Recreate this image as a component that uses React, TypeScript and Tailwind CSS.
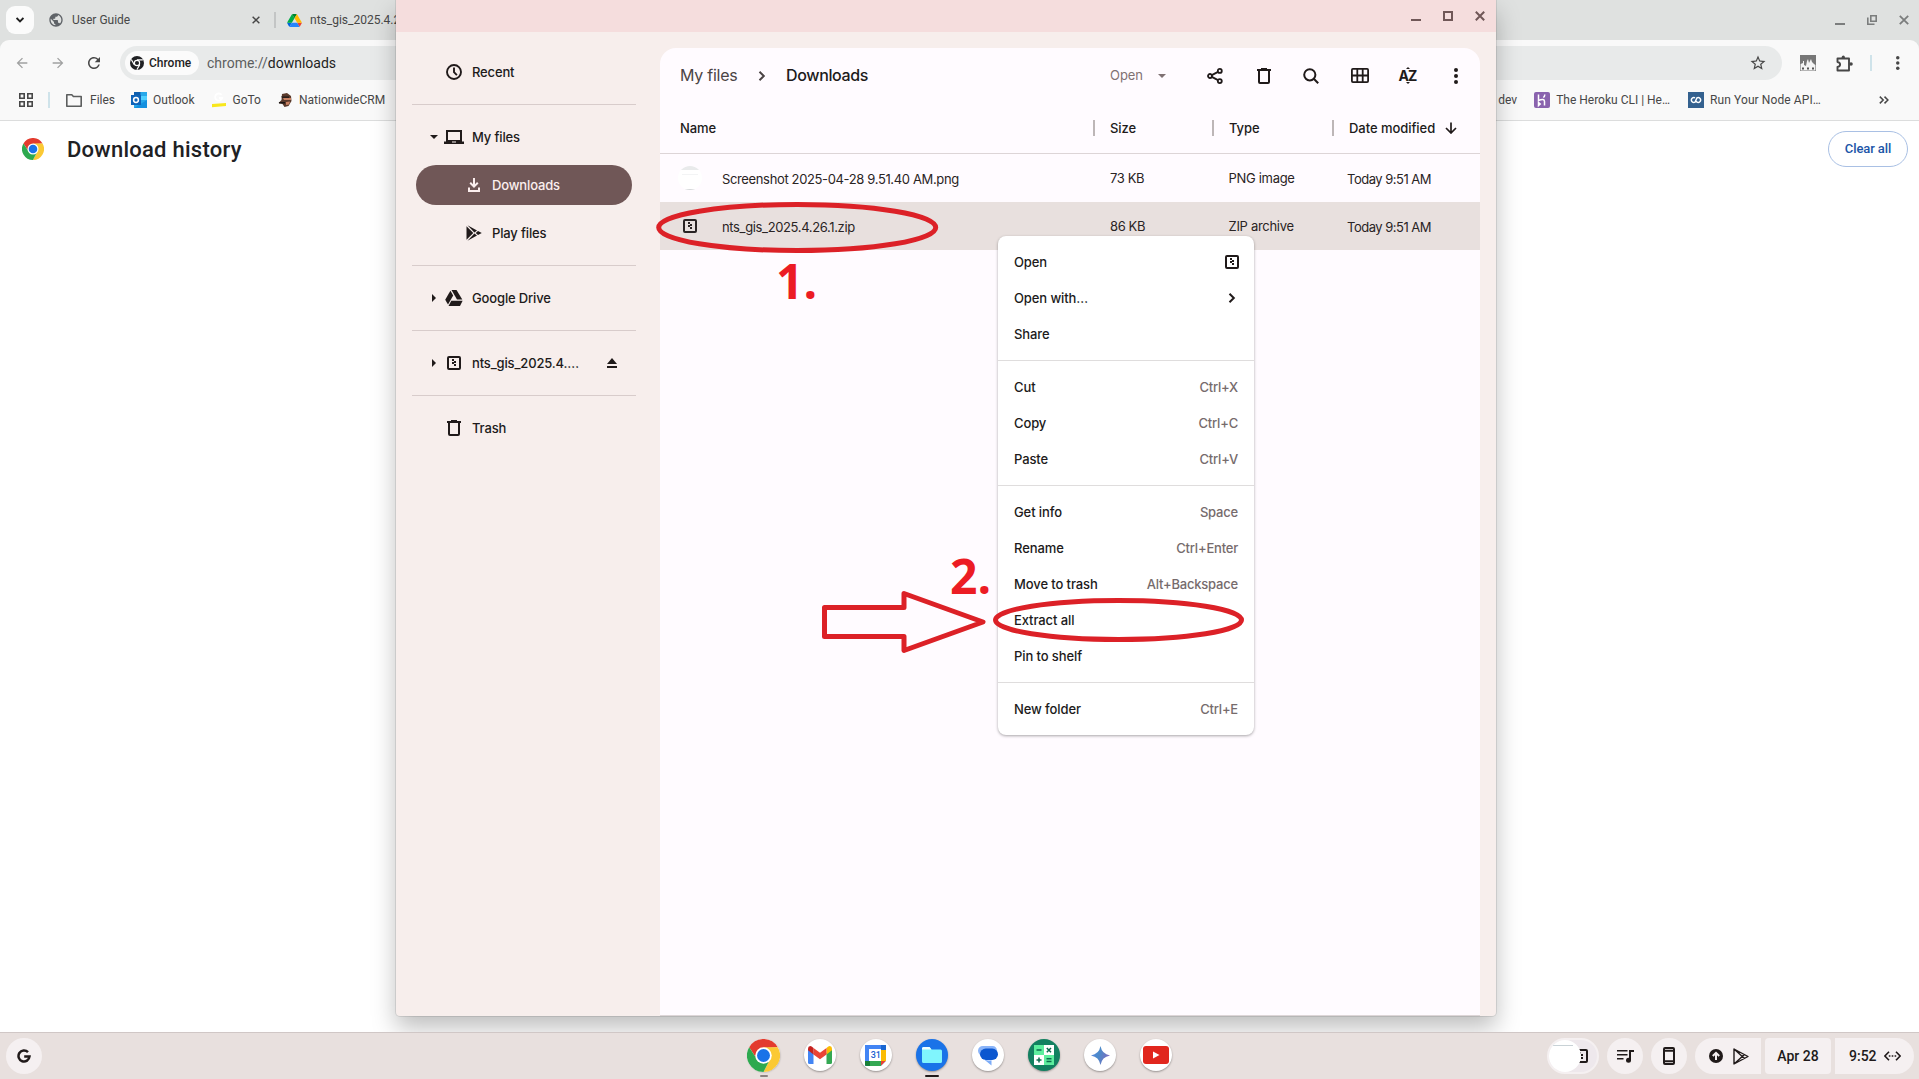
import React from "react";
import { MdArrowBack, MdArrowForward, MdRefresh, MdPublic, MdStarOutline } from "react-icons/md";

type IconProps = { className?: string };

const ui = "font-['Inter','Liberation_Sans',sans-serif]";

/* ---------- icons ---------- */

function ChromeLogo({ className = "", mono = false }: IconProps & { mono?: boolean }) {
  if (mono) {
    return (
      <svg viewBox="0 0 48 48" className={className} fill="none" stroke="#202124">
        <circle cx="24" cy="24" r="24" fill="#202124" stroke="none" />
        <circle cx="24" cy="24" r="9" fill="#202124" stroke="#fff" strokeWidth="4" />
        <path d="M24 13H44M14.5 29.5L4.5 12M33.5 29.5L23.5 47" stroke="#fff" strokeWidth="4" />
      </svg>
    );
  }
  return (
    <svg viewBox="0 0 48 48" className={className}>
      <circle cx="24" cy="24" r="24" fill="#fff" />
      <path d="M3.2 12A24 24 0 0 1 44.8 12L24 13L14.5 29.5Z" fill="#e33b2e" />
      <path d="M44.8 12A24 24 0 0 1 24 48L33.5 29.5L24 12Z" fill="#fbc934" />
      <path d="M24 48A24 24 0 0 1 3.2 12L14.5 29.5L33.5 29.5Z" fill="#2da94f" />
      <circle cx="24" cy="24" r="12" fill="#fff" />
      <circle cx="24" cy="24" r="9.4" fill="#1a73e8" />
    </svg>
  );
}

function DriveColor({ className = "" }: IconProps) {
  return (
    <svg viewBox="0 0 87.3 78" className={className}>
      <path d="m6.6 66.85 3.85 6.65c.8 1.4 1.95 2.5 3.3 3.3l13.75-23.8h-27.5c0 1.55.4 3.1 1.2 4.5z" fill="#0066da" />
      <path d="m43.65 25-13.75-23.8c-1.35.8-2.5 1.9-3.3 3.3l-25.4 44a9.06 9.06 0 0 0 -1.2 4.5h27.5z" fill="#00ac47" />
      <path d="m73.55 76.8c1.35-.8 2.5-1.9 3.3-3.3l1.6-2.75 7.65-13.25c.8-1.4 1.2-2.95 1.2-4.5h-27.5l5.85 11.5z" fill="#ea4335" />
      <path d="m43.65 25 13.75-23.8c-1.35-.8-2.9-1.2-4.5-1.2h-18.5c-1.6 0-3.15.45-4.5 1.2z" fill="#00832d" />
      <path d="m59.8 53h-32.3l-13.75 23.8c1.35.8 2.9 1.2 4.5 1.2h50.8c1.6 0 3.15-.45 4.5-1.2z" fill="#2684fc" />
      <path d="m73.4 26.5-12.7-22c-.8-1.4-1.95-2.5-3.3-3.3l-13.75 23.8 16.15 28h27.45c0-1.55-.4-3.1-1.2-4.5z" fill="#ffba00" />
    </svg>
  );
}

function DriveMono({ className = "" }: IconProps) {
  return (
    <svg viewBox="0 0 18 16" className={className} fill="currentColor">
      <path d="M5.4.8 8.2 5.6 3 14.6.2 9.8Z" />
      <path d="M6.5 0H11.5L17.3 9.6H12Z" />
      <path d="M6.3 10.8H17.6L15 15.9H3.5Z" />
    </svg>
  );
}

function ZipIcon({ className = "" }: IconProps) {
  return (
    <svg viewBox="0 0 14 14" className={className}>
      <rect x="1" y="1" width="12" height="12" rx="1" fill="none" stroke="currentColor" strokeWidth="2" />
      <path d="M5 3h2v2H5zM7 5h2v2H7zM5 6h2v2H5zM7 8h2v2H7z" fill="currentColor" />
    </svg>
  );
}

function TrashIcon({ className = "" }: IconProps) {
  return (
    <svg viewBox="0 0 14 16" className={className} fill="none" stroke="currentColor" strokeWidth="2">
      <path d="M2 2.5V14a1 1 0 0 0 1 1h8a1 1 0 0 0 1-1V2.5" />
      <path d="M0 2h14M4 1h6" />
    </svg>
  );
}

function ClockIcon({ className = "" }: IconProps) {
  return (
    <svg viewBox="0 0 16 16" className={className} fill="none" stroke="currentColor" strokeWidth="1.9">
      <circle cx="8" cy="8" r="7" />
      <path d="M8 3.500V8.200L10.900 11.100" />
    </svg>
  );
}

function CloseIcon({ className = "", sw = 2 }: IconProps & { sw?: number }) {
  return (
    <svg viewBox="0 0 10 10" className={className} stroke="currentColor" strokeWidth={sw}>
      <path d="M.8.8 9.2 9.2M9.2.8.8 9.2" />
    </svg>
  );
}

function DotsIcon({ className = "" }: IconProps) {
  return (
    <svg viewBox="0 0 4 16" className={className} fill="currentColor">
      <circle cx="2" cy="2" r="2" />
      <circle cx="2" cy="8" r="2" />
      <circle cx="2" cy="14" r="2" />
    </svg>
  );
}

function ChevronIcon({ className = "" }: IconProps) {
  return (
    <svg viewBox="0 0 8 10" className={className} fill="none" stroke="currentColor" strokeWidth="2">
      <path d="M1.5.8 5.8 5 1.5 9.2" />
    </svg>
  );
}

function Tri({ dir, className = "" }: IconProps & { dir: "down" | "right" }) {
  return (
    <svg viewBox="0 0 8 8" className={className} fill="currentColor">
      <path d={dir === "down" ? "M0 2h8L4 6z" : "M2 0v8l4-4z"} />
    </svg>
  );
}

/* ---------- browser behind ---------- */

function Bookmark({ icon, label, className = "" }: { icon?: React.ReactNode; label: string; className?: string }) {
  return (
    <div className={"flex h-4 shrink-0 items-center whitespace-nowrap text-[12px] leading-4 text-[#474747] " + className}>
      {icon}
      <span>{label}</span>
    </div>
  );
}

function Browser() {
  return (
    <div className="flex h-[1032px] flex-col bg-white font-[Roboto,sans-serif]">
      <div className="flex h-10 shrink-0 items-center bg-[#dfe1e0] text-[#474747]">
        <div className="ml-1.5 flex size-7 items-center justify-center rounded-[9px] bg-[#fbfbfb] text-[#1f1f1f]">
          <svg viewBox="0 0 8 6" className="h-1.5 w-2" fill="none" stroke="currentColor" strokeWidth="1.8">
            <path d="M.6 1 4 4.4 7.4 1" />
          </svg>
        </div>
        <MdPublic className="ml-3.5 size-4 text-[#5f6368]" />
        <span className="ml-2 w-[180px] text-[12px]">User Guide</span>
        <CloseIcon className="size-2" sw={1.8} />
        <div className="ml-3.5 h-4 w-0.5 bg-[#c3c5c5]" />
        <DriveColor className="ml-[11px] h-[13px] w-[15px]" />
        <span className="ml-2 text-[12px]">nts_gis_2025.4.26.1.zip</span>
        <div className="ml-auto mr-2.5 flex items-center text-[#7b7d7d]">
          <div className="mt-2 h-0.5 w-2.5 bg-current" />
          <svg viewBox="0 0 10 10" className="ml-[22px] size-2.5" fill="none" stroke="currentColor" strokeWidth="1.6">
            <path d="M3.8.8h5.4v5.4H3.8zM.8 2.5v6.7h6.7" />
          </svg>
          <CloseIcon className="ml-[22px] size-2.5" sw={1.8} />
        </div>
      </div>
      <div className="shrink-0 bg-[#dfe1e0]">
        <div className="h-[81px] rounded-t-[9px] border-b border-[#dcdddd] bg-[#f9f9f9]">
          <div className="flex h-[46px] items-center">
            <MdArrowBack className="ml-3.5 size-4 text-[#a0a1a1]" />
            <MdArrowForward className="ml-5 size-4 text-[#a0a1a1]" />
            <MdRefresh className="ml-[19px] size-[18px] text-[#474747]" />
            <div className="ml-[17px] flex h-[34px] w-[1662px] items-center rounded-full bg-[#e8eaea]">
              <div className="ml-[5px] flex h-6 w-[74px] items-center rounded-full bg-[#fbfbfb] pl-[5px] text-[12px] font-medium text-[#1f1f1f]">
                <ChromeLogo mono className="mr-[5px] size-3.5" />
                <span>Chrome</span>
              </div>
              <span className="ml-2 text-[14px] text-[#5c5e5e]">
                chrome://<span className="text-[#1f1f1f]">downloads</span>
              </span>
              <MdStarOutline className="ml-auto mr-[15px] size-[18px] text-[#474747]" />
            </div>
            <svg viewBox="0 0 16 16" className="ml-[18px] size-4">
              <path d="M0 0h16v16H0z" fill="#777" />
              <path d="M.6 15.400V9l2.400-1V6h1v4l2 1 1-5 1-2 1 4 2-4 1 3 2 2 1.400 1v5.400z" fill="#f4f4f4" />
              <path d="M2 12.500h2v2H2zM7 12.500h2v2H7zM12 12.500h2v2h-2z" fill="#555" />
            </svg>
            <svg viewBox="0 0 17 17" className="ml-5 size-[17px]" fill="none" stroke="#474747" strokeWidth="1.9">
              <path d="M1.5 3.5H13V15.5H1.5V12q2.6-.5 2.6-2.5T1.5 7z" strokeLinejoin="round" />
              <circle cx="7.3" cy="2.2" r="1.6" fill="#474747" stroke="none" />
              <circle cx="15" cy="9" r="1.8" fill="#474747" stroke="none" />
            </svg>
            <div className="ml-[17px] h-4 w-0.5 bg-[#cfe3ea]" />
            <DotsIcon className="ml-6 h-3.5 w-[3.5px] text-[#474747]" />
          </div>
          <div className="flex h-[28px] items-center">
            <svg viewBox="0 0 14 14" className="ml-[19px] size-3.5" fill="none" stroke="#474747" strokeWidth="1.6">
              <path d="M.8.8h4.4v4.4H.8zM8.8.8h4.4v4.4H8.8zM.8 8.8h4.4v4.4H.8zM8.8 8.8h4.4v4.4H8.8z" />
            </svg>
            <div className="ml-[15px] h-4 w-0.5 bg-[#cfe3ea]" />
            <Bookmark
              className="ml-4"
              label="Files"
              icon={
                <svg viewBox="0 0 16 13" className="mr-2 h-[13px] w-4" fill="none" stroke="#5c5e5e" strokeWidth="1.6">
                  <path d="M.8.8h5l1.6 1.7h7.8v9.7H.8z" strokeLinejoin="round" />
                </svg>
              }
            />
            <Bookmark
              className="ml-4"
              label="Outlook"
              icon={
                <svg viewBox="0 0 16 16" className="mr-1.5 size-4">
                  <path d="M3 0h13v16H3z" fill="#28a8ea" />
                  <path d="M3 0h6.500v8H3z" fill="#0f5fae" />
                  <path d="M9.500 4H16v4H9.500z" fill="#50d0ff" />
                  <path d="M3 16 16 8v8z" fill="#1490df" />
                  <path d="M0 3h10v10H0z" fill="#0f63b8" />
                  <circle cx="5" cy="8" r="2.4" fill="none" stroke="#fff" strokeWidth="1.5" />
                </svg>
              }
            />
            <Bookmark
              className="ml-[17px]"
              label="GoTo"
              icon={
                <svg viewBox="0 0 14 16" className="mr-[7px] h-4 w-3.5">
                  <path d="M9.500 2.800A3.600 3.600 0 1 0 10.200 6H7" fill="none" stroke="#fff" strokeWidth="1.800" />
                  <path d="M0 12 14 11V14L0 15.300z" fill="#f8e71c" />
                </svg>
              }
            />
            <Bookmark
              className="ml-[17px]"
              label="NationwideCRM"
              icon={
                <svg viewBox="0 0 14 14" className="mr-[7px] size-3.5">
                  <path d="M4 1 9 0l4 3 .5 5-3 5-4 1-2-3-4-1 3-3z" fill="#5a3a2c" />
                  <path d="M5 5h8v2H6zM8 9l4-.5-1 3-3 .5z" fill="#c98263" />
                  <path d="M3 3.500h8v1.300H4zM1 9h6v1.500H1z" fill="#1b1614" />
                </svg>
              }
            />
            <Bookmark className="ml-auto" label="dev" />
            <Bookmark
              className="ml-[17px]"
              label="The Heroku CLI | He…"
              icon={
                <svg viewBox="0 0 16 16" className="mr-1.5 size-4">
                  <rect width="16" height="16" rx="2" fill="#8a63ae" />
                  <path d="M4.500 2.500v6q6-2.500 6 1v4M4.500 10.500v3l1.700-1.500zM10.800 2.500q0 2-1.500 3" fill="none" stroke="#fff" strokeWidth="1.500" />
                </svg>
              }
            />
            <Bookmark
              className="ml-[18px] w-[133px] tracking-[0.1px]"
              label="Run Your Node API…"
              icon={
                <svg viewBox="0 0 16 16" className="mr-1.5 size-4">
                  <path d="M0 0h16v16H0z" fill="#34618f" />
                  <path d="M7 5.800a2.500 2.500 0 1 0 0 4.400L9 5.800a2.500 2.500 0 1 1 0 4.400L7.500 8.500" fill="none" stroke="#fff" strokeWidth="1.500" />
                </svg>
              }
            />
            <svg viewBox="0 0 10 8" className="ml-[58px] mr-[30px] h-2 w-2.5" fill="none" stroke="#474747" strokeWidth="1.500">
              <path d="M.8.6 4.200 4 .8 7.400M5.500.6 8.900 4 5.500 7.400" />
            </svg>
          </div>
        </div>
      </div>
      <div className="flex h-14 items-center">
        <ChromeLogo className="ml-[22px] size-[22px]" />
        <h1 className="ml-[23px] text-[22px] font-medium tracking-[0.25px] text-[#202124]">Download history</h1>
        <button className="ml-auto mr-[11px] h-9 w-20 rounded-full border border-[#a9c0e4] text-[13px] font-medium tracking-[-0.1px] text-[#1b55a8]">Clear all</button>
      </div>
    </div>
  );
}

/* ---------- files window ---------- */

function NavItem({ icon, label, arrow, nested, active, end }: { icon: React.ReactNode; label: string; arrow?: "down" | "right"; nested?: boolean; active?: boolean; end?: React.ReactNode }) {
  return (
    <div
      className={
        "mx-5 flex h-10 items-center rounded-full text-[13px] font-medium " +
        (active ? "bg-[#705757] text-[#fbeeee] " : "text-[#201a1a] ") +
        (nested ? "pl-5" : "")
      }
    >
      <div className="flex w-7 justify-center pl-2">{arrow && <Tri dir={arrow} className="size-2" />}</div>
      <div className="flex w-5 justify-center">{icon}</div>
      <span className="ml-2 pt-px tracking-[-0.15px]">{label}</span>
      {end && <div className="ml-auto mr-[15px]">{end}</div>}
    </div>
  );
}

function NavRule() {
  return <div className="mx-4 my-3 h-px shrink-0 bg-[#d8cccb]" />;
}

function Sidebar() {
  return (
    <nav className="flex w-[264px] shrink-0 flex-col pr-2 pt-5">
      <NavItem icon={<ClockIcon className="size-4" />} label="Recent" />
      <NavRule />
      <NavItem
        arrow="down"
        label="My files"
        icon={
          <svg viewBox="0 0 20 14" className="h-3.5 w-5 shrink-0" fill="currentColor">
            <path d="M2 0h16v11.500h2V14H0v-2.500h2zM4 2v8h12V2zM8 11.500v1h4v-1z" fillRule="evenodd" />
          </svg>
        }
      />
      <div className="h-2" />
      <NavItem
        nested
        active
        label="Downloads"
        icon={
          <svg viewBox="0 0 12 14" className="h-3.5 w-3" fill="none" stroke="currentColor" strokeWidth="2">
            <path d="M6 0v8M2.200 4.800 6 8.600l3.800-3.800M1 9.500V13h10V9.500" />
          </svg>
        }
      />
      <div className="h-2" />
      <NavItem
        nested
        label="Play files"
        icon={
          <svg viewBox="0 0 16 16" className="size-4" fill="currentColor">
            <path d="M.5 1.200 7.300 8 .5 14.800zM1.500.3 11 5.400 8.400 7.500zM1.500 15.700 11 10.600 8.400 8.500zM12 6l3.800 2L12 10 9.700 8z" />
          </svg>
        }
      />
      <NavRule />
      <NavItem arrow="right" label="Google Drive" icon={<DriveMono className="h-4 w-[18px] shrink-0" />} />
      <NavRule />
      <NavItem
        arrow="right"
        label="nts_gis_2025.4.…"
        icon={<ZipIcon className="size-3.5" />}
        end={
          <svg viewBox="0 0 10 10" className="size-2.5" fill="currentColor">
            <path d="M5 0l5 6H0zM0 8h10v2H0z" />
          </svg>
        }
      />
      <NavRule />
      <NavItem label="Trash" icon={<TrashIcon className="h-4 w-3.5" />} />
    </nav>
  );
}

function FileRow({ icon, name, size, type, selected }: { icon: React.ReactNode; name: string; size: string; type: string; selected?: boolean }) {
  return (
    <div className={"flex h-12 items-center text-[13px] text-[#2a2424] " + (selected ? "bg-[#e8e0de]" : "")}>
      <div className="flex w-[62px] justify-center pr-[2px]">{icon}</div>
      <span className="w-[388px] pt-[3px] tracking-[-0.36px]">{name}</span>
      <span className="w-[118.5px] pt-px tracking-[-0.4px]">{size}</span>
      <span className="w-[118.5px] pt-px tracking-[-0.3px]">{type}</span>
      <span className="pt-[3px] tracking-[-0.5px]">Today 9:51 AM</span>
    </div>
  );
}

function ColumnRule() {
  return <div className="mr-[15px] h-4 w-0.5 shrink-0 bg-[#bdb6b7]" />;
}

function FilePanel() {
  return (
    <main className="h-[967px] w-[820px] overflow-hidden rounded-t-2xl bg-[#fffbff] text-[#201a1a]">
      <div className="flex h-[55px] items-center">
        <span className="ml-5 w-[78px] pb-px text-[16px] tracking-[-0.25px] text-[#4b4445]">My files</span>
        <ChevronIcon className="h-2.5 w-2 text-[#4b4445]" />
        <span className="ml-5 pb-px text-[16px] font-medium tracking-[-0.35px]">Downloads</span>
        <div className="ml-auto flex items-center">
          <span className="pt-px text-[13px] tracking-[-0.05px] text-[#7f7173]">Open</span>
          <Tri dir="down" className="ml-[15px] size-2 text-[#7f7173]" />
          <svg viewBox="0 0 16 16" className="ml-[41px] size-4" fill="none" stroke="currentColor" strokeWidth="1.800">
            <circle cx="12.800" cy="2.900" r="2" />
            <circle cx="12.800" cy="13.100" r="2" />
            <circle cx="3" cy="8" r="2" />
            <path d="M4.800 7.100 11 3.900M4.800 8.900 11 12.100" />
          </svg>
          <TrashIcon className="ml-[34px] h-4 w-3.5" />
          <svg viewBox="0 0 16 16" className="ml-8 size-4" fill="none" stroke="currentColor" strokeWidth="2">
            <circle cx="6.800" cy="6.800" r="5.600" />
            <path d="M10.800 10.800 15.200 15.200" />
          </svg>
          <svg viewBox="0 0 18 15" className="ml-8 h-[15px] w-[18px]" fill="none" stroke="currentColor" strokeWidth="1.800">
            <rect x=".9" y=".9" width="16.200" height="13.200" rx="1" />
            <path d="M6.300 1v13M11.700 1v13M1 7.500h16" />
          </svg>
          <div className="ml-[29px] flex w-[19px] flex-col items-center">
            <svg viewBox="0 0 4 2" className="h-0.5 w-1" fill="currentColor"><path d="M0 2 2 0l2 2z" /></svg>
            <span className="text-[14px] leading-[13px] font-bold tracking-[-0.8px]">AZ</span>
            <svg viewBox="0 0 4 2" className="h-0.5 w-1" fill="currentColor"><path d="M0 0h4L2 2z" /></svg>
          </div>
          <DotsIcon className="ml-[37px] mr-[22px] h-4 w-1" />
        </div>
      </div>
      <div className="flex h-[51px] items-center border-b border-[#ddd5d7] text-[13px] font-medium">
        <span className="ml-5 w-[413px] pt-px tracking-[-0.1px]">Name</span>
        <ColumnRule />
        <span className="w-[102px] pt-px tracking-[-0.1px]">Size</span>
        <ColumnRule />
        <span className="w-[103px] pt-px tracking-[-0.1px]">Type</span>
        <ColumnRule />
        <span className="pt-px tracking-[-0.05px]">Date modified</span>
        <svg viewBox="0 0 12 12" className="ml-auto mr-[23px] size-3" fill="none" stroke="currentColor" strokeWidth="1.700">
          <path d="M6 .5v10M1 6l5 5 5-5" />
        </svg>
      </div>
      <FileRow
        name="Screenshot 2025-04-28 9.51.40 AM.png"
        size="73 KB"
        type="PNG image"
        icon={
          <div className="flex size-6 flex-col overflow-hidden rounded-full bg-white">
            <div className="h-1 bg-[#e9eaeb]" />
            <div className="mx-1 mt-1 h-px bg-[#f3f4f5]" />
            <div className="mt-auto h-px bg-[#d5d8da]" />
          </div>
        }
      />
      <FileRow selected name="nts_gis_2025.4.26.1.zip" size="86 KB" type="ZIP archive" icon={<ZipIcon className="size-3.5" />} />
    </main>
  );
}

function FilesWindow() {
  return (
    <section
      className={
        "absolute left-[396px] top-0 flex h-[1016px] w-[1100px] flex-col rounded-b bg-[#f7eeec] shadow-[0_0_0_1px_rgba(0,0,0,0.09),0_12px_24px_rgba(0,0,0,0.26)] " + ui
      }
    >
      <header className="flex h-8 shrink-0 items-center justify-end bg-[#f5dddd] pr-[11px] text-[#705757]">
        <div className="mt-[7px] h-0.5 w-2.5 bg-current" />
        <div className="ml-[22px] size-2.5 border-2 border-current" />
        <CloseIcon className="ml-[22px] size-2.5" />
      </header>
      <div className="flex min-h-0 flex-1">
        <Sidebar />
        <div className="pt-4">
          <FilePanel />
          <div className="h-px bg-[#ddd5d7]" />
        </div>
      </div>
    </section>
  );
}

/* ---------- context menu ---------- */

const menu: { label: string; hint?: React.ReactNode }[][] = [
  [
    { label: "Open", hint: <ZipIcon className="-mr-px size-3.5 text-[#201a1a]" /> },
    { label: "Open with…", hint: <ChevronIcon className="mr-[2px] h-2.5 w-2 text-[#201a1a]" /> },
    { label: "Share" },
  ],
  [
    { label: "Cut", hint: "Ctrl+X" },
    { label: "Copy", hint: "Ctrl+C" },
    { label: "Paste", hint: "Ctrl+V" },
  ],
  [
    { label: "Get info", hint: "Space" },
    { label: "Rename", hint: "Ctrl+Enter" },
    { label: "Move to trash", hint: "Alt+Backspace" },
    { label: "Extract all" },
    { label: "Pin to shelf" },
  ],
  [{ label: "New folder", hint: "Ctrl+E" }],
];

function ContextMenu() {
  return (
    <div className={"absolute left-[998px] top-[236px] w-64 divide-y divide-[#dfdddd] rounded-lg bg-white text-[13px] shadow-[0_1px_3px_rgba(0,0,0,0.35)] " + ui}>
      {menu.map((group, i) => (
        <div key={i} className="py-2">
          {group.map((item) => (
            <div key={item.label} className="flex h-9 items-center justify-between px-4">
              <span className="pt-px font-medium tracking-[-0.1px] text-[#201a1a]">{item.label}</span>
              <span className={typeof item.hint === "string" ? "pt-px font-medium tracking-[-0.2px] text-[#766b6c]" : ""}>{item.hint}</span>
            </div>
          ))}
        </div>
      ))}
    </div>
  );
}

/* ---------- markup drawn over the windows ---------- */

function Annotations() {
  const label = "absolute font-['Open_Sans',sans-serif] text-[48px] leading-none font-bold text-[#ec1c24]";
  return (
    <>
      <svg className="absolute left-0 top-0 h-[1079px] w-[1919px]" fill="none" stroke="#dc2127" strokeWidth="5">
        <ellipse cx="797.200" cy="227.500" rx="138.500" ry="23" />
        <ellipse cx="1118.500" cy="620" rx="123" ry="19.500" />
        <path d="M824.500 607.500H904V593.500L983 622 904 650.500V636.500H824.500Z" strokeLinejoin="round" />
      </svg>
      <span className={label + " left-[776px] top-[257px]"}>1.</span>
      <span className={label + " left-[950px] top-[552px]"}>2.</span>
    </>
  );
}

/* ---------- shelf ---------- */

function ShelfApp({ className = "bg-white", mark, children }: { className?: string; mark?: string; children: React.ReactNode }) {
  return (
    <div className="relative flex w-[56.15px] justify-center">
      <div className={"flex size-8 items-center justify-center rounded-full shadow-[0_1px_2px_rgba(0,0,0,0.35)] " + className}>{children}</div>
      {mark && <div className={"absolute top-9 h-0.5 rounded-sm " + mark} />}
    </div>
  );
}

function Shelf() {
  return (
    <footer className="flex h-[47px] items-start justify-between border-t border-[#d0c7c6] bg-[#e8e0de] font-[Roboto,sans-serif] text-[#201a1a]">
      <div className="ml-1.5 mt-[5px] flex h-9 w-[350px]">
        <div className="flex size-9 items-center justify-center rounded-full bg-[#f5f0f1]">
          <svg viewBox="0 0 14 14" className="size-3.5" fill="none" stroke="currentColor" strokeWidth="2.500">
            <path d="M11 3.200A5.500 5.500 0 1 0 12.500 7.500H7.200" />
          </svg>
        </div>
      </div>
      <div className="ml-[17px] mt-[6px] flex">
        <ShelfApp mark="w-2 bg-[#8d8281]"><ChromeLogo className="size-[33px] shrink-0" /></ShelfApp>
        <ShelfApp>
          <svg viewBox="0 0 24 18" className="h-[18px] w-6">
            <path d="M0 3v13.500Q0 18 1.500 18H5.500V7z" fill="#4285f4" />
            <path d="M24 3v13.500Q24 18 22.500 18H18.500V7z" fill="#34a853" />
            <path d="M18.500 2v6.500L24 4.300V2.500Q24 0 21.700 0 20.500 0 18.500 2" fill="#fbbc04" />
            <path d="M5.500 8.500V2L12 6.800 18.500 2v6.500L12 13.300z" fill="#ea4335" />
            <path d="M0 2.500v1.800l5.500 4.200V2Q3.500 0 2.300 0 0 0 0 2.500" fill="#c5221f" />
          </svg>
        </ShelfApp>
        <ShelfApp>
          <div className="relative flex size-[21px] items-center justify-center">
            <svg viewBox="0 0 21 21" className="absolute inset-0">
              <path d="M0 0h21v21H0z" fill="#4285f4" />
              <path d="M16 0h5v5h-5z" fill="#1967d2" />
              <path d="M16 5h5v11h-5z" fill="#fbbc04" />
              <path d="M0 16h5v5H1.500Q0 21 0 19.500z" fill="#188038" />
              <path d="M5 16h11v5H5z" fill="#34a853" />
              <path d="M16 16h5l-5 5z" fill="#ea4335" />
              <path d="M21 16v5h-5z" fill="#fff" />
              <path d="M4 4h12v12H4z" fill="#fff" />
            </svg>
            <span className="relative text-[9px] leading-none font-medium text-[#1a5fd0]">31</span>
          </div>
        </ShelfApp>
        <ShelfApp className="bg-[#1a73e8]" mark="w-3.5 bg-[#201a1a]">
          <svg viewBox="0 0 20 16" className="h-4 w-5">
            <path d="M0 1.500Q0 0 1.500 0H7.500L9.500 2.500H18.500Q20 2.500 20 4V14.500Q20 16 18.500 16H1.500Q0 16 0 14.500z" fill="#80f5fd" />
            <path d="M0 1.500Q0 0 1.500 0H7.500L9.500 2.500H0z" fill="#f0ffff" />
          </svg>
        </ShelfApp>
        <ShelfApp>
          <svg viewBox="0 0 21 21" className="size-[21px]">
            <path d="M5 1h9.500q4 0 4.500 4.500H12q-7 0-8 6Q0 9 0 5.500 .5 1 5 1" fill="#8ab4f8" />
            <rect x="2" y="3.500" width="18" height="11.500" rx="5.750" fill="#0b57d0" />
            <path d="M5.500 14Q7.500 16 13.500 15.200V20.500z" fill="#7cacf8" />
          </svg>
        </ShelfApp>
        <ShelfApp className="bg-[#128060]">
          <svg viewBox="0 0 20 20" className="size-5" strokeWidth="1.500">
            <path d="M0 0h20v20H0z" fill="#fff" />
            <path d="M0 0h10v10H0zM10 10h10v10H10z" fill="#5dee9e" />
            <path d="M2.500 5h5M12.800 3l4.200 4.200M17 3l-4.200 4.200M5 12.500v5M2.500 15h5M12.500 13.700h5M12.500 16.500h5" stroke="#0c6b4e" />
          </svg>
        </ShelfApp>
        <ShelfApp>
          <svg viewBox="0 0 20 20" className="size-[19px]">
            <defs>
              <linearGradient id="spark" x1="0" x2="1" y1="0" y2=".3">
                <stop offset="0" stopColor="#5b86e5" />
                <stop offset=".5" stopColor="#4b8ac9" />
                <stop offset="1" stopColor="#7b6fc0" />
              </linearGradient>
            </defs>
            <path d="M10 0Q11.500 8.500 20 10 11.500 11.500 10 20 8.500 11.500 0 10 8.500 8.500 10 0" fill="url(#spark)" />
          </svg>
        </ShelfApp>
        <ShelfApp>
          <svg viewBox="0 0 26 18" className="h-[18px] w-[26px]">
            <rect width="26" height="18" rx="3" fill="#e1261d" />
            <path d="M10 5.500v7l6.500-3.500z" fill="#fff" />
          </svg>
        </ShelfApp>
      </div>
      <div className="mr-[5px] mt-[5px] flex">
        <div className="mr-2 flex h-9 w-[52px] items-center rounded-full border-2 border-[#f5f0f1] bg-[#eee8ec]">
          <div className="z-10 flex size-8 shrink-0 items-start overflow-hidden rounded-full bg-white">
            <div className="ml-1 mt-[5px] h-px w-5 bg-[#c9d2d6]" />
          </div>
          <ZipIcon className="-ml-[7px] size-3.5 shrink-0" />
        </div>
        <div className="mr-2 flex size-9 items-center justify-center rounded-full bg-[#f5f0f1]">
          <svg viewBox="0 0 17 13" className="h-[13px] w-[17px]" fill="currentColor">
            <path d="M0 0h10.500v1.600H0zM0 4h10.500v1.600H0zM0 8h6.500v1.600H0zM12 0h5v2h-3v8.500h-2z" />
            <circle cx="11.500" cy="10.300" r="2.500" />
          </svg>
        </div>
        <div className="mr-2 flex size-9 items-center justify-center rounded-full bg-[#f5f0f1]">
          <svg viewBox="0 0 12 18" className="h-[18px] w-3" fill="none" stroke="currentColor" strokeWidth="2">
            <rect x="1" y="1" width="10" height="16" rx="1" />
            <path d="M1 3.800h10M1 14.200h10" />
          </svg>
        </div>
        <div className="mr-1 flex h-9 w-[66px] items-center rounded-l-full rounded-r bg-[#f5f0f1] pl-3.5">
          <svg viewBox="0 0 14 14" className="size-3.5">
            <circle cx="7" cy="7" r="7" fill="currentColor" />
            <path d="M7 11V4M3.800 7 7 3.800 10.200 7" fill="none" stroke="#f5f0f1" strokeWidth="2" />
          </svg>
          <svg viewBox="0 0 16 17" className="ml-2.5 h-[17px] w-4" fill="none" stroke="currentColor" strokeWidth="1.400" strokeLinejoin="round">
            <path d="M1 1 15 8.500 1 16zM1 1 11.500 10.500M1 16 11.500 6.500" />
          </svg>
        </div>
        <div className="mr-1 flex h-9 w-[66px] items-center justify-center rounded bg-[#f5f0f1] pt-px text-[14px] font-medium">Apr 28</div>
        <div className="flex h-9 w-[79px] items-center rounded-l rounded-r-full bg-[#f5f0f1] pl-3.5 text-[14px] font-medium">
          <span className="pt-px">9:52</span>
          <svg viewBox="0 0 17 10" className="ml-[7px] h-2.5 w-[17px]" fill="none" stroke="currentColor" strokeWidth="1.600">
            <path d="M5 .8.900 5 5 9.200M12 .8 16.100 5 12 9.200" />
            <path d="M4.800 5h1.600M7.700 5h1.600M10.600 5h1.600" />
          </svg>
        </div>
      </div>
    </footer>
  );
}

export default function App() {
  return (
    <div className="relative h-[1079px] w-[1919px] overflow-hidden">
      <div className="relative h-[1032px] overflow-hidden">
        <Browser />
        <FilesWindow />
      </div>
      <Shelf />
      <ContextMenu />
      <Annotations />
    </div>
  );
}
